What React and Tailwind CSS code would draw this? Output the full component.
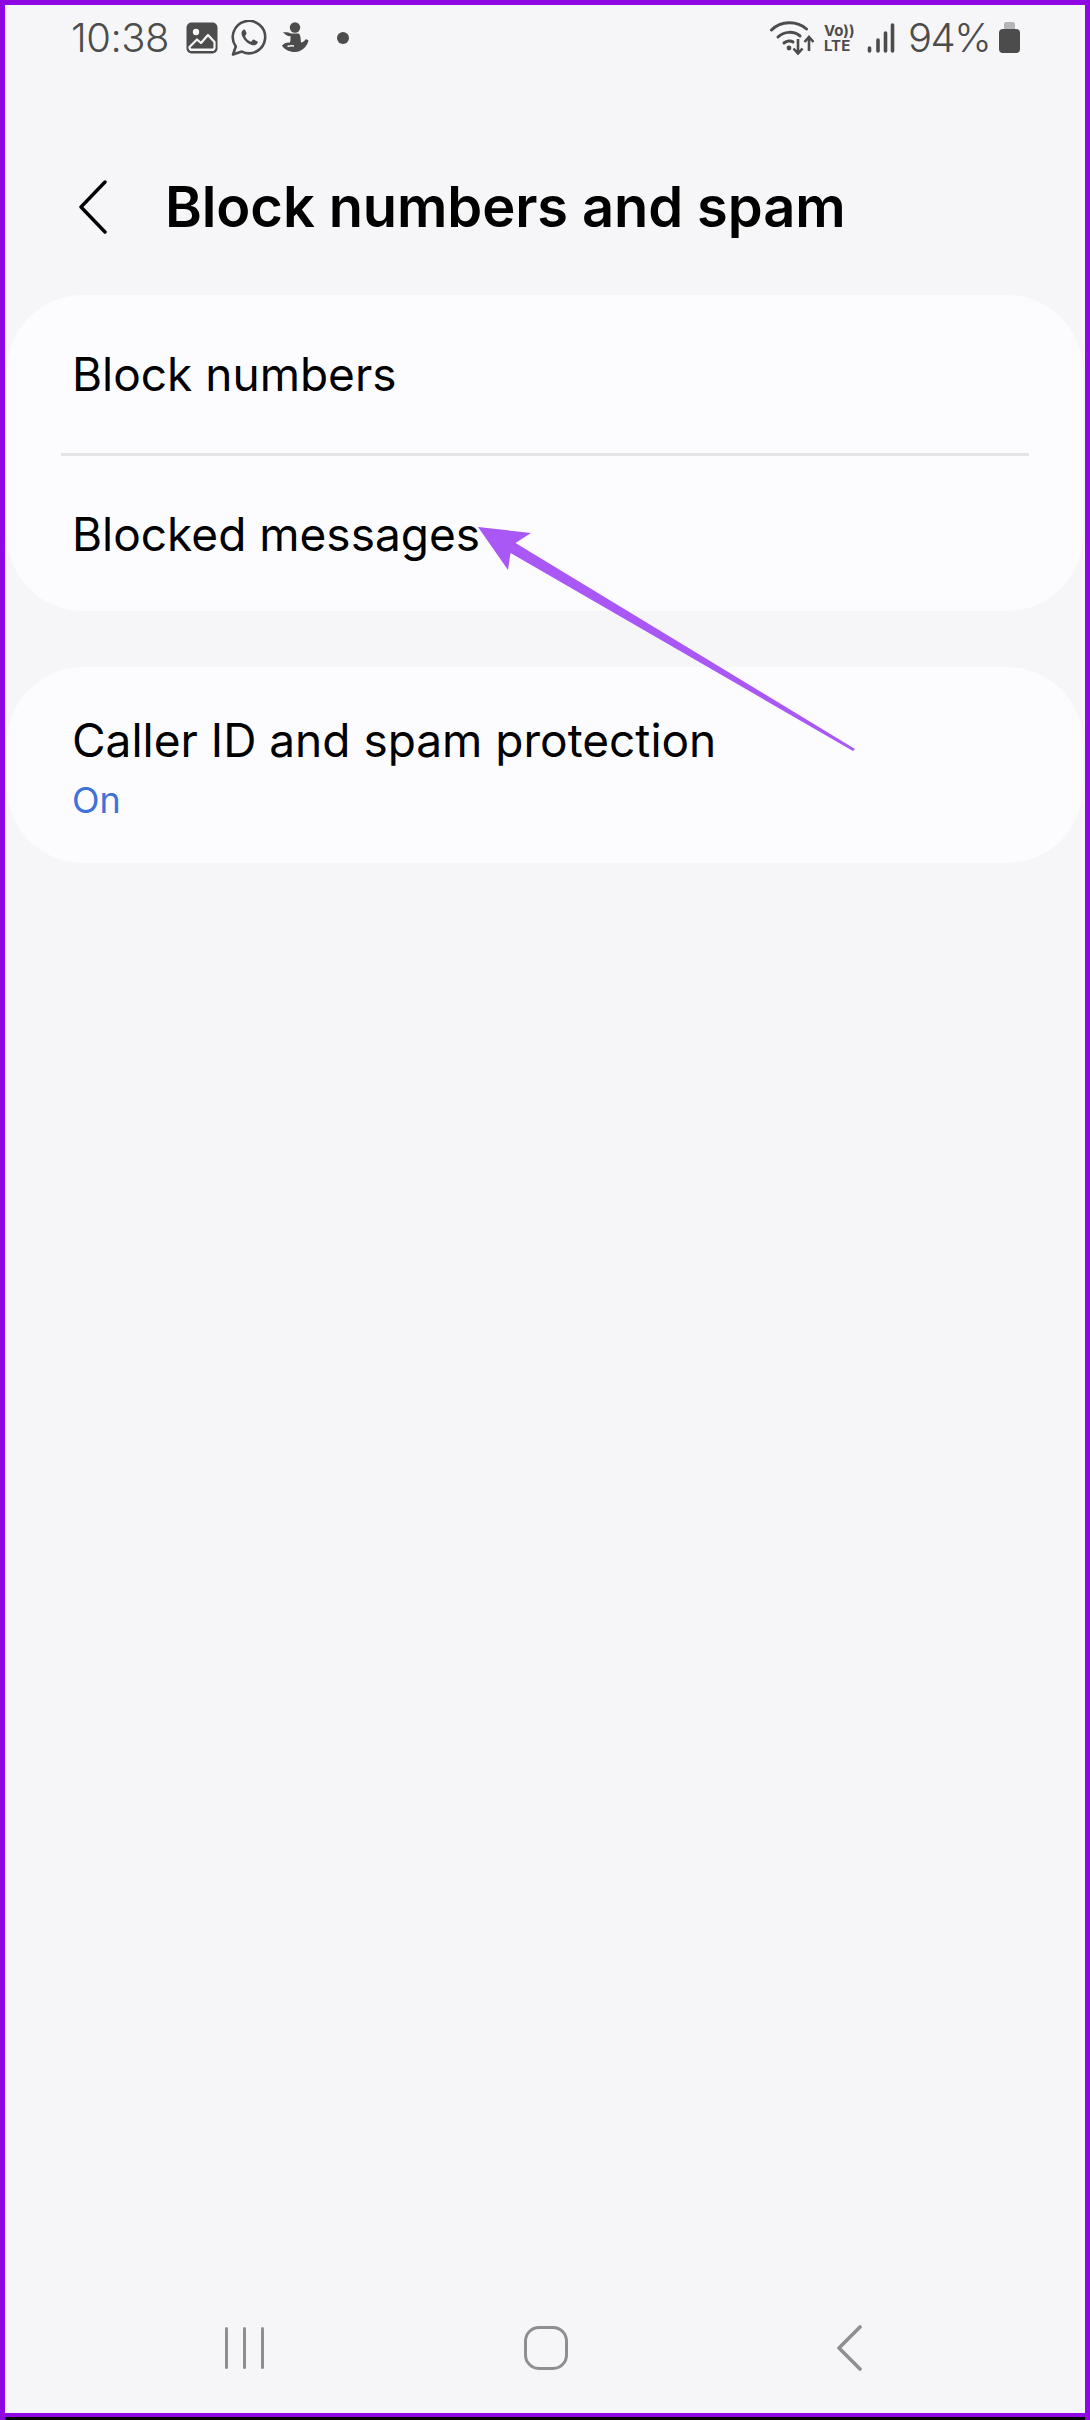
import React from 'react';

const ImageIcon = () => (
  <svg width="32" height="32" viewBox="0 0 32 32" className="shrink-0">
    <rect x="0.5" y="0.5" width="31" height="31" rx="5" fill="#4c4c4c" />
    <circle cx="10" cy="10" r="3.2" fill="#f6f6f8" />
    <path d="M3.5 25 L11 17.5 L15 21 L22 13 L28.5 20 V25.5 Q28.5 27.5 26.5 27.5 H5.5 Q3.5 27.5 3.5 25.5 Z" fill="none" stroke="#f6f6f8" strokeWidth="2.2" strokeLinejoin="round" />
    <path d="M4 28 H28" stroke="#f6f6f8" strokeWidth="2" />
  </svg>
);

const WhatsappIcon = () => (
  <svg width="37" height="36" viewBox="0 0 37 36" className="shrink-0">
    <path d="M2 34.5 L4.8 26.5 A16.2 16.2 0 1 1 10.8 31.6 Z" fill="none" stroke="#4c4c4c" strokeWidth="2.6" strokeLinejoin="round" />
    <path d="M12.8 9.6 C11 10.6 10 12.6 10.8 15 C12.2 19.6 16.6 24 21.4 25.2 C24 25.8 26 24.6 26.8 22.6 C27 22 26.8 21.6 26.4 21.4 L22.8 19.6 C22.2 19.4 21.8 19.6 21.6 20 L20.4 21.4 C20 21.8 19.6 21.8 19.2 21.6 C17 20.6 15.2 18.8 14.2 16.6 C14 16.2 14.2 15.8 14.4 15.4 L15.4 14 C15.6 13.6 15.6 13.2 15.4 12.8 L14 9.8 C13.8 9.4 13.2 9.4 12.8 9.6 Z" fill="#4c4c4c" />
  </svg>
);

const FigureIcon = () => (
  <svg width="28" height="31" viewBox="0 0 28 31" className="shrink-0">
    <circle cx="14" cy="5.5" r="5.2" fill="#4c4c4c" />
    <path d="M2 10.5 C5 10 8 10.5 10 11.5 L10 14 C7.5 14.6 5 13.5 2 10.5 Z" fill="#4c4c4c" />
    <path d="M10 11.5 H18 C20 14 19.5 17 20 20.5 C21.5 20.5 23.5 19 25 17 L27.5 18.5 C26.5 24 21 30 14 30 C8.5 30 3 27.5 1 23.5 C3 21 6 20 9 20.5 C10 17.5 9 14.5 10 11.5 Z" fill="#4c4c4c" />
    <path d="M6.5 24.5 C9 23.5 11 23.5 13 24" stroke="#f6f6f8" strokeWidth="1.4" fill="none" />
  </svg>
);

const WifiIcon = () => (
  <svg width="45" height="35" viewBox="0 0 45 35" className="shrink-0">
    <g fill="none" stroke="#4c4c4c" strokeWidth="3" strokeLinecap="round">
      <path d="M1.5 10 C11 0.5 27 0.5 36.5 9" />
      <path d="M8 17 C14 11 24 11 30 16" />
      <path d="M14 23 C17 20.5 21 20.5 23 22" />
    </g>
    <circle cx="19" cy="28" r="2.4" fill="#4c4c4c" />
    <g fill="none" stroke="#4c4c4c" strokeWidth="2.6">
      <path d="M28 19 V33 M23.5 28.5 L28 33.5 L32.5 28.5" />
      <path d="M39 17 V31 M34.5 22 L39 17 L43.5 22" />
    </g>
  </svg>
);

const SignalIcon = () => (
  <svg width="28" height="30" viewBox="0 0 28 30" className="shrink-0">
    <g stroke="#4c4c4c" strokeWidth="3.6" strokeLinecap="round">
      <path d="M2.5 25 V28" />
      <path d="M11 17 V28" />
      <path d="M18.5 10 V28" />
      <path d="M25.5 2 V28" />
    </g>
  </svg>
);

const BatteryIcon = () => (
  <div className="flex w-[21px] shrink-0 flex-col items-center">
    <div className="h-[7px] w-[11px] rounded-t-[2px] bg-[#b5b5b7]" />
    <div className="h-[24px] w-[21px] rounded-[4px] bg-[#4c4c4c]" />
  </div>
);

const StatusBar = () => (
  <div className="flex h-[33px] items-center text-[#4c4c4c]">
    <span className="ml-[66px] w-[101px] text-[40px] leading-none font-light tracking-[-0.5px]">10:38</span>
    <div className="ml-[14px] flex items-center gap-[13px]">
      <ImageIcon />
      <WhatsappIcon />
      <FigureIcon />
    </div>
    <div className="ml-[28px] h-[12px] w-[12px] rounded-full bg-[#4c4c4c]" />
    <div className="ml-auto flex items-center">
      <WifiIcon />
      <div className="ml-[9px] flex w-[33px] flex-col text-[15px] leading-[15px] font-bold">
        <span>Vo))</span>
        <span>LTE</span>
      </div>
      <div className="ml-[10px]"><SignalIcon /></div>
      <span className="ml-[13px] w-[84px] text-[40px] leading-none font-light tracking-[-1.5px]">94%</span>
      <div className="mr-[65px] ml-[7px]"><BatteryIcon /></div>
    </div>
  </div>
);

const Arrow = () => (
  <svg className="absolute top-[520px] left-[470px]" width="390" height="235" viewBox="470 520 390 235">
    <path d="M478 527 L531 533 L515.5 543 L855 749 L853 751 L510.5 553 L508 570 Z" fill="#a958f5" />
  </svg>
);

export default function App() {
  return (
    <div
      className="relative h-[2420px] w-[1090px] overflow-hidden bg-[#f6f6f8] border-t-[5px] border-r-[5px] border-l-[5px] border-[#8f08e3]"
      style={{ fontFamily: 'Inter, "Noto Sans", sans-serif' }}
    >
      <div className="pt-[16px]">
        <StatusBar />
      </div>

      {/* Header */}
      <div className="mt-[127px] flex h-[52px] items-center">
        <svg width="30" height="54" viewBox="0 0 30 54" className="ml-[73px] shrink-0">
          <path d="M27 2 L3 27 L27 52" fill="none" stroke="#000" strokeWidth="3.4" strokeLinecap="round" strokeLinejoin="round" />
        </svg>
        <h1 className="ml-[57px] text-[56px] leading-none font-semibold tracking-[-0.1px] text-black">Block numbers and spam</h1>
      </div>

      {/* Block list */}
      <div className="mx-[2px] mt-[62px] flex h-[316px] flex-col rounded-[76px] bg-[#fcfcfe]">
        <div className="flex h-[158px] items-center pl-[65px] text-[46px] leading-none text-black">Block numbers</div>
        <div className="mx-[54px] h-[3px] bg-[#e4e4e6]" />
        <div className="flex h-[155px] items-center pl-[65px] text-[46px] leading-none text-black">Blocked messages</div>
      </div>

      {/* Caller ID */}
      <div className="mx-[2px] mt-[56px] h-[196px] rounded-[76px] bg-[#fcfcfe] pt-[45px] pl-[65px]">
        <div className="text-[46px] leading-[56px] text-black">Caller ID and spam protection</div>
        <div className="mt-[12px] text-[36px] leading-[40px] text-[#3e72d8]">On</div>
      </div>

      {/* Navigation bar */}
      <div className="absolute right-0 bottom-0 left-0 h-[7px] bg-black" />
      <div className="absolute right-0 bottom-[3px] left-0 h-[4px] bg-[#8f08e3]" />
      <div className="absolute bottom-[50px] left-0 flex h-[44px] w-full items-center">
        <div className="ml-[220px] flex h-[42px] gap-[15px]">
          <div className="w-[3px] rounded-full bg-[#8f8f91]" />
          <div className="w-[3px] rounded-full bg-[#8f8f91]" />
          <div className="w-[3px] rounded-full bg-[#8f8f91]" />
        </div>
        <div className="ml-[260px] h-[44px] w-[44px] rounded-[15px] border-[3.5px] border-[#8f8f91]" />
        <svg width="26" height="46" viewBox="0 0 26 46" className="ml-[268px]">
          <path d="M24 2 L3 23 L24 44" fill="none" stroke="#8f8f91" strokeWidth="3.6" strokeLinecap="round" strokeLinejoin="round" />
        </svg>
      </div>

      <div className="absolute top-[-5px] left-[-5px]">
        <div className="relative h-[2420px] w-[1090px]">
          <Arrow />
        </div>
      </div>
    </div>
  );
}
